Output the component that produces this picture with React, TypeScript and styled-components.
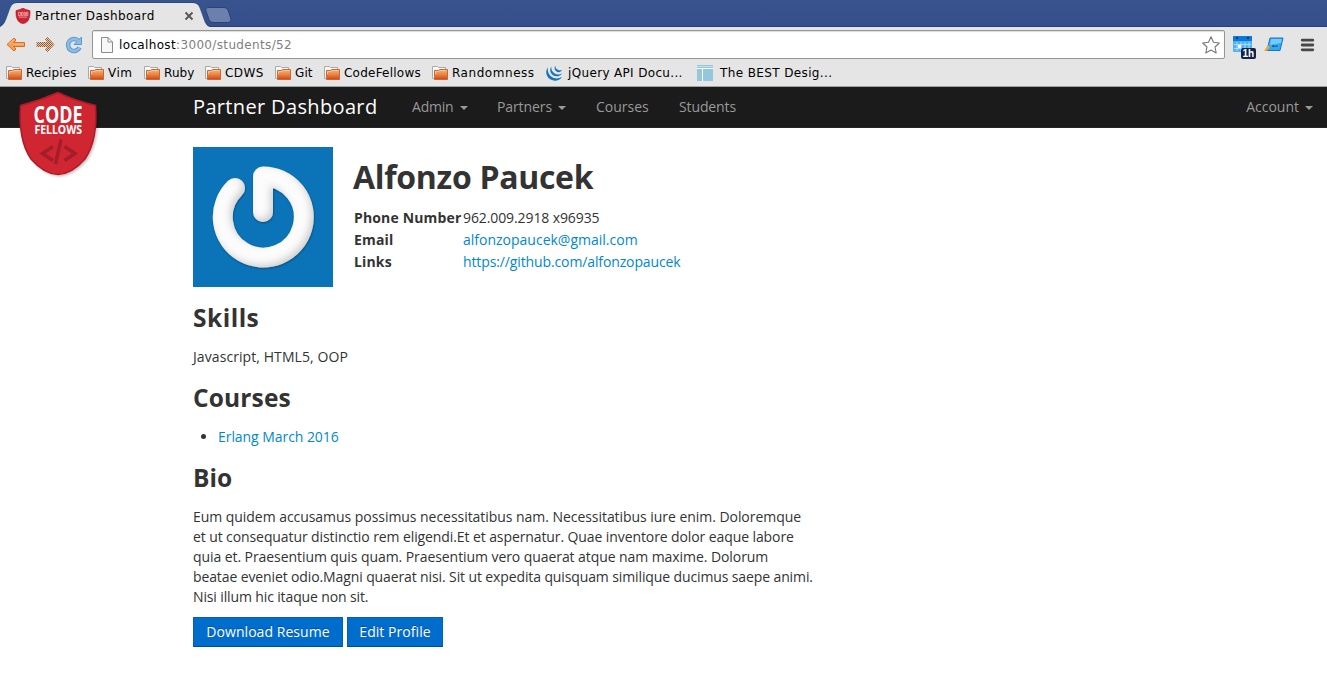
import React from "react";
import styled, { createGlobalStyle } from "styled-components";

const GlobalStyle = createGlobalStyle`
  * { box-sizing: border-box; }
  body { margin: 0; background: #fff; color: #333; font: 14px/20px "Open Sans", sans-serif; overflow: hidden; }
  a { color: #0088cc; text-decoration: none; }
`;

const Page = styled.div`width: 1327px; height: 684px; background: #fff;`;
const Chrome = styled.header`
  height: 87px; background: #e5e5e5; border-bottom: 1px solid #a0a29f; color: #000;
  font-family: "DejaVu Sans", sans-serif; font-size: 12px; line-height: 16px;
`;
const TabStrip = styled.div`
  height: 27px; position: relative; background: linear-gradient(#38538e, #34508c); border-bottom: 1px solid #26407a;
`;
const TabShape = styled.svg`position: absolute; left: 0; top: 0;`;
const TabContent = styled.div`
  position: relative; display: flex; align-items: center; height: 27px; padding: 5px 0 0 15px; width: 200px;
`;
const TabTitle = styled.span`margin-left: 4px; width: 149px; white-space: nowrap; letter-spacing: 0.42px;`;
const Toolbar = styled.div`display: flex; align-items: center; height: 34px; padding: 1px 12px 0 6px;`;
const ToolIcon = styled.svg<{ $gap?: number }>`flex: none; margin-right: ${(p) => p.$gap ?? 0}px;`;
const Address = styled.div`
  display: flex; flex: none; align-items: center; width: 1133px; height: 29px; padding: 0 4px 0 7px; margin-right: 7px;
  background: #fff; border: 1px solid #969696; border-radius: 2px; box-shadow: inset 0 1px 1px #ddd;
`;
const Url = styled.span`flex: 1; margin-left: 5px; color: #808080; letter-spacing: 0.35px; span { color: #000; }`;
const Bookmarks = styled.nav`display: flex; align-items: center; height: 24px; padding-left: 6px;`;
const Bookmark = styled.span<{ $width: number; $gap: number; $track: number }>`
  display: flex; align-items: center; width: ${(p) => p.$width}px; gap: ${(p) => p.$gap}px;
  white-space: nowrap; letter-spacing: ${(p) => p.$track}px;
`;

const Navbar = styled.nav`
  position: relative; display: flex; align-items: center; height: 41px; padding: 0 14px 0 193px;
  background: #1b1b1b; border-bottom: 1px solid #252525; color: #999;
`;
const ShieldLogo = styled.svg`position: absolute; left: 15px; top: 2px;`;
const Brand = styled.span`width: 219px; font-size: 20px; color: #fff; letter-spacing: 0.35px;`;
const NavItem = styled.span<{ $width?: number; $track?: number }>`
  display: flex; align-items: center; width: ${(p) => (p.$width ? `${p.$width}px` : "auto")};
  letter-spacing: ${(p) => p.$track ?? 0}px;
`;
const Caret = styled.i`
  margin: 1px 0 0 6px; border: 4px solid transparent; border-top-color: #999; border-bottom: 0;
`;
const Spacer = styled.div`flex: 1;`;

const Main = styled.main`width: 835px; padding: 19px 0 0 193px;`;
const Profile = styled.section`display: flex; gap: 20px; height: 140px;`;
const Avatar = styled.svg`flex: none;`;
const Name = styled.h1`
  margin: 10px 0; font-size: 32px; line-height: 40px; font-weight: 700; white-space: nowrap; letter-spacing: -0.3px;
`;
const Details = styled.dl`
  display: grid; grid-template-columns: 109px auto; row-gap: 2px; margin: 11px 0 0 1px; white-space: nowrap;
  dt { font-weight: 700; letter-spacing: 0.15px; } dd { margin: 0; }
`;
const Tracked = styled.span<{ $track: number }>`letter-spacing: ${(p) => p.$track}px;`;
const Heading = styled.h3<{ $track?: number }>`
  margin: 10px 0; padding-top: 1px; height: 40px; font-size: 24.5px; line-height: 40px; font-weight: 700;
  letter-spacing: ${(p) => p.$track ?? 0}px;
`;
const Paragraph = styled.p`margin: 0 0 10px;`;
const Courses = styled.ul`margin: 0 0 10px; padding: 0 0 0 25px;`;
const BioLine = styled.span<{ $track?: number }>`display: block; white-space: nowrap; letter-spacing: ${(p) => p.$track ?? 0}px;`;
const Actions = styled.div`display: flex; gap: 4px;`;
const Button = styled.button<{ $width: number }>`
  width: ${(p) => p.$width}px; height: 30px; padding: 0; border: 1px solid #0062bd; border-bottom-color: #004c99;
  background: #006dcc; color: #fff; font: 14px/20px "Open Sans", sans-serif; white-space: nowrap;
  text-shadow: 0 -1px 0 rgba(0, 0, 0, 0.25); letter-spacing: 0.05px;
`;

const shieldPath = "M43 3.500C51 7.500 64 12.500 80.500 16.500Q83 51 70 70Q57 85 43 85.500Q29 85 16 70Q3 51 5.500 16.500C21 12.500 34 7.500 43 3.500Z";

function FolderIcon() {
  return (
    <svg width="16" height="16" viewBox="0 0 16 16">
      <defs>
        <linearGradient id="folder" x2="0" y2="1">
          <stop stopColor="#f5b57d" /><stop offset=".5" stopColor="#e98541" /><stop offset="1" stopColor="#d24614" />
        </linearGradient>
      </defs>
      <path d="M.5 13.500V1.500h5l1 1h7v2L3 13.500z" fill="#f8f8f8" stroke="#aaa" />
      <path d="M2.500 14.500v-9h4l1-1h8v10z" fill="url(#folder)" stroke="#cc6635" />
      <path d="M3.500 9V6.500H7l1-1h6.500" fill="none" stroke="#f8c396" />
    </svg>
  );
}

function JQueryIcon() {
  return (
    <svg width="17" height="16" viewBox="0 0 17 16" fill="#1673b8">
      <path d="M2 2.500C-1 6 0 11 3.500 13.800C7 16.500 13 16.500 16 12C12.500 14 8.500 14 5.500 11.800C2.500 9.500 1.200 6 2 2.500Z" />
      <path d="M5.300 1.500C3.500 4.500 4 8 7 10.200C10 12.200 14 11.500 16 8.500C13 9.900 10.500 9.700 8.300 8.200C5.900 6.500 5 4 5.300 1.500Z" />
      <path d="M9.300.500C8 3 8.600 5.200 10.500 6.500C12.500 7.700 15 7.200 16 5C14.200 5.700 12.600 5.500 11.300 4.600C9.800 3.500 9.200 2 9.300.500Z" />
    </svg>
  );
}

function TemplateIcon() {
  return (
    <svg width="16" height="16" viewBox="0 0 16 16">
      <path fill="#93c7db" d="M0 0h16v16H0z" />
      <path d="M0 3.500h16M5.500 3.500v12.500" stroke="#fff" />
      <path d="M0 1.500h16" stroke="#c5e1eb" />
    </svg>
  );
}

const bookmarks = [
  { label: "Recipies", width: 82, gap: 4, track: 0.1 },
  { label: "Vim", width: 56, gap: 4, track: 0.5 },
  { label: "Ruby", width: 61, gap: 4, track: 0.1 },
  { label: "CDWS", width: 70, gap: 4, track: 0.4 },
  { label: "Git", width: 49, gap: 4, track: 0.1 },
  { label: "CodeFellows", width: 108, gap: 4, track: 0.23 },
  { label: "Randomness", width: 114, gap: 4, track: 0.55 },
  { label: "jQuery API Docu...", width: 151, gap: 5, track: 0.34, icon: <JQueryIcon /> },
  { label: "The BEST Desig...", width: 150, gap: 7, track: 0.38, icon: <TemplateIcon /> },
];

function Browser() {
  return (
    <Chrome>
      <TabStrip>
        <TabShape width="235" height="27">
          <path d="M0 27Q4 25 6 19L10 8Q12 3 17 3H193Q198 3 200 8L205 22Q207 27 211 27Z" fill="#e5e5e5" />
          <path d="M0 26Q4 25 6 19L10 8Q12 2.500 17 2.500H193Q198 2.500 200 8L205 22Q207 26.500 211 26.500" fill="none" stroke="#243e78" strokeOpacity=".5" />
          <path d="M209 7.500H224Q227 7.500 228 10L231 19Q231.500 22.500 228 22.500H213Q210 22.500 209 19.500L206 11Q205 7.500 209 7.500Z" fill="#6b80ad" stroke="#2c4377" />
        </TabShape>
        <TabContent>
          <svg width="16" height="16" viewBox="3 2 80 86">
            <path d={shieldPath} fill="#cf2532" stroke="#ad1f2e" strokeWidth="4" />
            <path d="M19 25h10v18H19zM35 25h8v18h-8zM49 25h7v18h-7zM62 25h7v18h-7zM21 51h44" fill="none" stroke="#f4b5b8" strokeWidth="4" />
            <path d="M30 62l-8 6 8 5m26-11 8 6-8 5" fill="none" stroke="#a51b2a" strokeWidth="4" />
          </svg>
          <TabTitle>Partner Dashboard</TabTitle>
          <svg width="10" height="10" viewBox="0 0 10 10"><path d="m1.500 1.500 7 7m0-7-7 7" stroke="#555" strokeWidth="1.800" /></svg>
        </TabContent>
      </TabStrip>
      <Toolbar>
        <ToolIcon $gap={10} width="20" height="18" viewBox="0 0 20 18">
          <path d="M1 8.500 8 2 10 4 7.500 6.500H18.500V10.500H7.500L10 13 8 15Z" fill="#f3a05a" stroke="#dd6a20" />
          <path d="M3 8 8 3.500M7 8h11" stroke="#f9c091" />
        </ToolIcon>
        <ToolIcon $gap={10} width="19" height="18" viewBox="0 0 19 18">
          <defs><pattern id="dither" width="2" height="2" patternUnits="userSpaceOnUse"><path d="M0 0h2v2H0z" fill="#dccbbd" /><path d="M0 0h1v1H0zM1 1h1v1H1z" fill="#9b5a2c" /></pattern></defs>
          <path d="M18.500 8.500 11.500 1 9 3.500 11.500 6H0.500V11H11.500L9 13.500 11.500 16Z" fill="url(#dither)" />
        </ToolIcon>
        <ToolIcon $gap={9} width="18" height="18" viewBox="0 0 18 18">
          <path d="M13.500 5A6 6 0 1 0 14.500 11.500" fill="none" stroke="#5a98d2" strokeWidth="4.500" />
          <path d="M16.500 1V8.500H9Z" fill="#8fbce6" stroke="#5a98d2" />
          <path d="M13.500 5A6 6 0 1 0 14.500 11.500" fill="none" stroke="#8fbce6" strokeWidth="2.500" />
        </ToolIcon>
        <Address>
          <svg width="14" height="16" viewBox="0 0 14 16"><path d="M1.500.5H8L12.500 5V15.500H1.500ZM8 .5V5H12.500" fill="#f7f7f7" stroke="#8b8b8b" /></svg>
          <Url><span>localhost</span>:3000/students/52</Url>
          <svg width="18" height="18" viewBox="0 0 18 18"><path d="m9 .8 2.500 5.500 5.800.7-4.300 4 1.200 6L9 14 3.800 17 5 11 .7 7l5.800-.7Z" fill="#fff" stroke="#777" strokeWidth="1.100" strokeLinejoin="round" /></svg>
        </Address>
        <ToolIcon $gap={7} width="25" height="29" viewBox="0 0 25 29">
          <path d="M1 7h19v14q0 1-1 1H2q-1 0-1-1z" fill="#4fb2f5" /><path d="M1 6h19v5H1z" fill="#087bda" />
          <path d="M5 12v9M9 12v9M13 12v9M17 12v9M2 14.500h17M2 18.500h17" stroke="#bfe5fd" strokeWidth=".8" />
          <path d="M4 7h2v2H4zM15 7h2v2h-2z" fill="#102f6b" /><path d="M6 15h3v3H6z" fill="#fff" />
          <rect x="9" y="18" width="15" height="11" rx="2" fill="#13234b" />
          <text x="10.500" y="27" fontFamily="Liberation Sans, sans-serif" fontWeight="700" fontSize="10" fill="#fff">1h</text>
        </ToolIcon>
        <ToolIcon $gap={16} width="20" height="18" viewBox="0 0 20 18">
          <path d="m6 2 13 0-3 12.500H3z" fill="#36a8ef" stroke="#1178cb" />
          <path d="m7 3 11 0-1 4L6 9z" fill="#75cafa" /><path d="m8 10.500 6-.5M8 10.500l2-1.500" stroke="#15579d" />
          <path d="m0 15 4-6 2 2-3 4z" fill="#eda33b" />
        </ToolIcon>
        <ToolIcon width="15" height="14" viewBox="0 0 15 14"><path d="M2.200 2.200h10.600M2.200 7h10.600M2.200 11.800h10.600" stroke="#484848" strokeWidth="2.800" strokeLinecap="round" /></ToolIcon>
      </Toolbar>
      <Bookmarks>
        {bookmarks.map((b) => (
          <Bookmark key={b.label} $width={b.width} $gap={b.gap} $track={b.track}>{b.icon ?? <FolderIcon />}{b.label}</Bookmark>
        ))}
      </Bookmarks>
    </Chrome>
  );
}

function CodeFellowsLogo() {
  return (
    <ShieldLogo width="88" height="92" viewBox="0 0 88 92">
      <defs><filter id="logoShadow"><feDropShadow dx="1.500" dy="1.500" stdDeviation="1" floodOpacity=".22" /></filter></defs>
      <path d={shieldPath} fill="#cf2630" stroke="#ab1c2c" strokeWidth="1.500" filter="url(#logoShadow)" />
      <g fill="#fff" fontFamily="Open Sans, sans-serif">
        <text x="18.500" y="34.300" fontSize="23" fontWeight="700" textLength="49" lengthAdjust="spacingAndGlyphs">CODE</text>
        <text x="19.500" y="45.300" fontSize="12.600" fontWeight="700" textLength="47.500" lengthAdjust="spacingAndGlyphs">FELLOWS</text>
      </g>
      <path d="M38 57.500 27.500 64.500 38 71.500M49.500 57.500 60 64.500 49.500 71.500M46 50.500 40.500 75" fill="none" stroke="#a41d2a" strokeWidth="3.500" />
    </ShieldLogo>
  );
}

function GravatarImage() {
  return (
    <Avatar width="140" height="140" viewBox="0 0 140 140" role="img" aria-label="Profile picture">
      <defs>
        <filter id="puffy" filterUnits="userSpaceOnUse" x="0" y="0" width="140" height="140">
          <feGaussianBlur in="SourceAlpha" stdDeviation="3.500" result="soft" />
          <feOffset in="soft" dx="-3" dy="-3" result="shift" />
          <feComposite in="SourceAlpha" in2="shift" operator="out" result="edge" />
          <feFlood floodColor="#8f8f8f" floodOpacity=".5" />
          <feComposite in2="edge" operator="in" result="shade" />
          <feMerge result="shape"><feMergeNode in="SourceGraphic" /><feMergeNode in="shade" /></feMerge>
          <feDropShadow in="shape" dx=".5" dy="1" stdDeviation="1" floodOpacity=".35" />
        </filter>
      </defs>
      <path fill="#0b74b9" d="M0 0h140v140H0z" />
      <g filter="url(#puffy)">
        <path d="M42 41A40.500 40.500 0 1 0 70 29.500V65" fill="none" stroke="#fcfcfc" strokeWidth="20" strokeLinecap="round" strokeLinejoin="round" />
      </g>
    </Avatar>
  );
}

export default function App() {
  return (
    <Page>
      <GlobalStyle />
      <Browser />
      <Navbar>
        <CodeFellowsLogo />
        <Brand>Partner Dashboard</Brand>
        <NavItem $width={85} $track={-0.2}>Admin<Caret /></NavItem>
        <NavItem $width={99} $track={-0.1}>Partners<Caret /></NavItem>
        <NavItem $width={83}>Courses</NavItem>
        <NavItem $track={-0.12}>Students</NavItem>
        <Spacer />
        <NavItem>Account<Caret /></NavItem>
      </Navbar>
      <Main>
        <Profile>
          <GravatarImage />
          <div>
            <Name>Alfonzo Paucek</Name>
            <Details>
              <dt>Phone Number</dt><dd><Tracked $track={-0.1}>962.009.2918 x96935</Tracked></dd>
              <dt>Email</dt><dd><a href="mailto:alfonzopaucek@gmail.com">alfonzopaucek@gmail.com</a></dd>
              <dt>Links</dt><dd><a href="https://github.com/alfonzopaucek"><Tracked $track={-0.12}>https://github.com/alfonzopaucek</Tracked></a></dd>
            </Details>
          </div>
        </Profile>
        <Heading $track={0.5}>Skills</Heading>
        <Paragraph><Tracked $track={0.08}>Javascript, HTML5, OOP</Tracked></Paragraph>
        <Heading $track={0.14}>Courses</Heading>
        <Courses><li><a href="#erlang"><Tracked $track={-0.06}>Erlang March 2016</Tracked></a></li></Courses>
        <Heading>Bio</Heading>
        <Paragraph>
          <BioLine $track={-0.047}>Eum quidem accusamus possimus necessitatibus nam. Necessitatibus iure enim. Doloremque</BioLine>
          <BioLine $track={-0.097}>et ut consequatur distinctio rem eligendi.Et et aspernatur. Quae inventore dolor eaque labore</BioLine>
          <BioLine $track={-0.073}>quia et. Praesentium quis quam. Praesentium vero quaerat atque nam maxime. Dolorum</BioLine>
          <BioLine $track={-0.116}>beatae eveniet odio.Magni quaerat nisi. Sit ut expedita quisquam similique ducimus saepe animi.</BioLine>
          <BioLine $track={-0.13}>Nisi illum hic itaque non sit.</BioLine>
        </Paragraph>
        <Actions><Button $width={150}>Download Resume</Button><Button $width={96}>Edit Profile</Button></Actions>
      </Main>
    </Page>
  );
}
